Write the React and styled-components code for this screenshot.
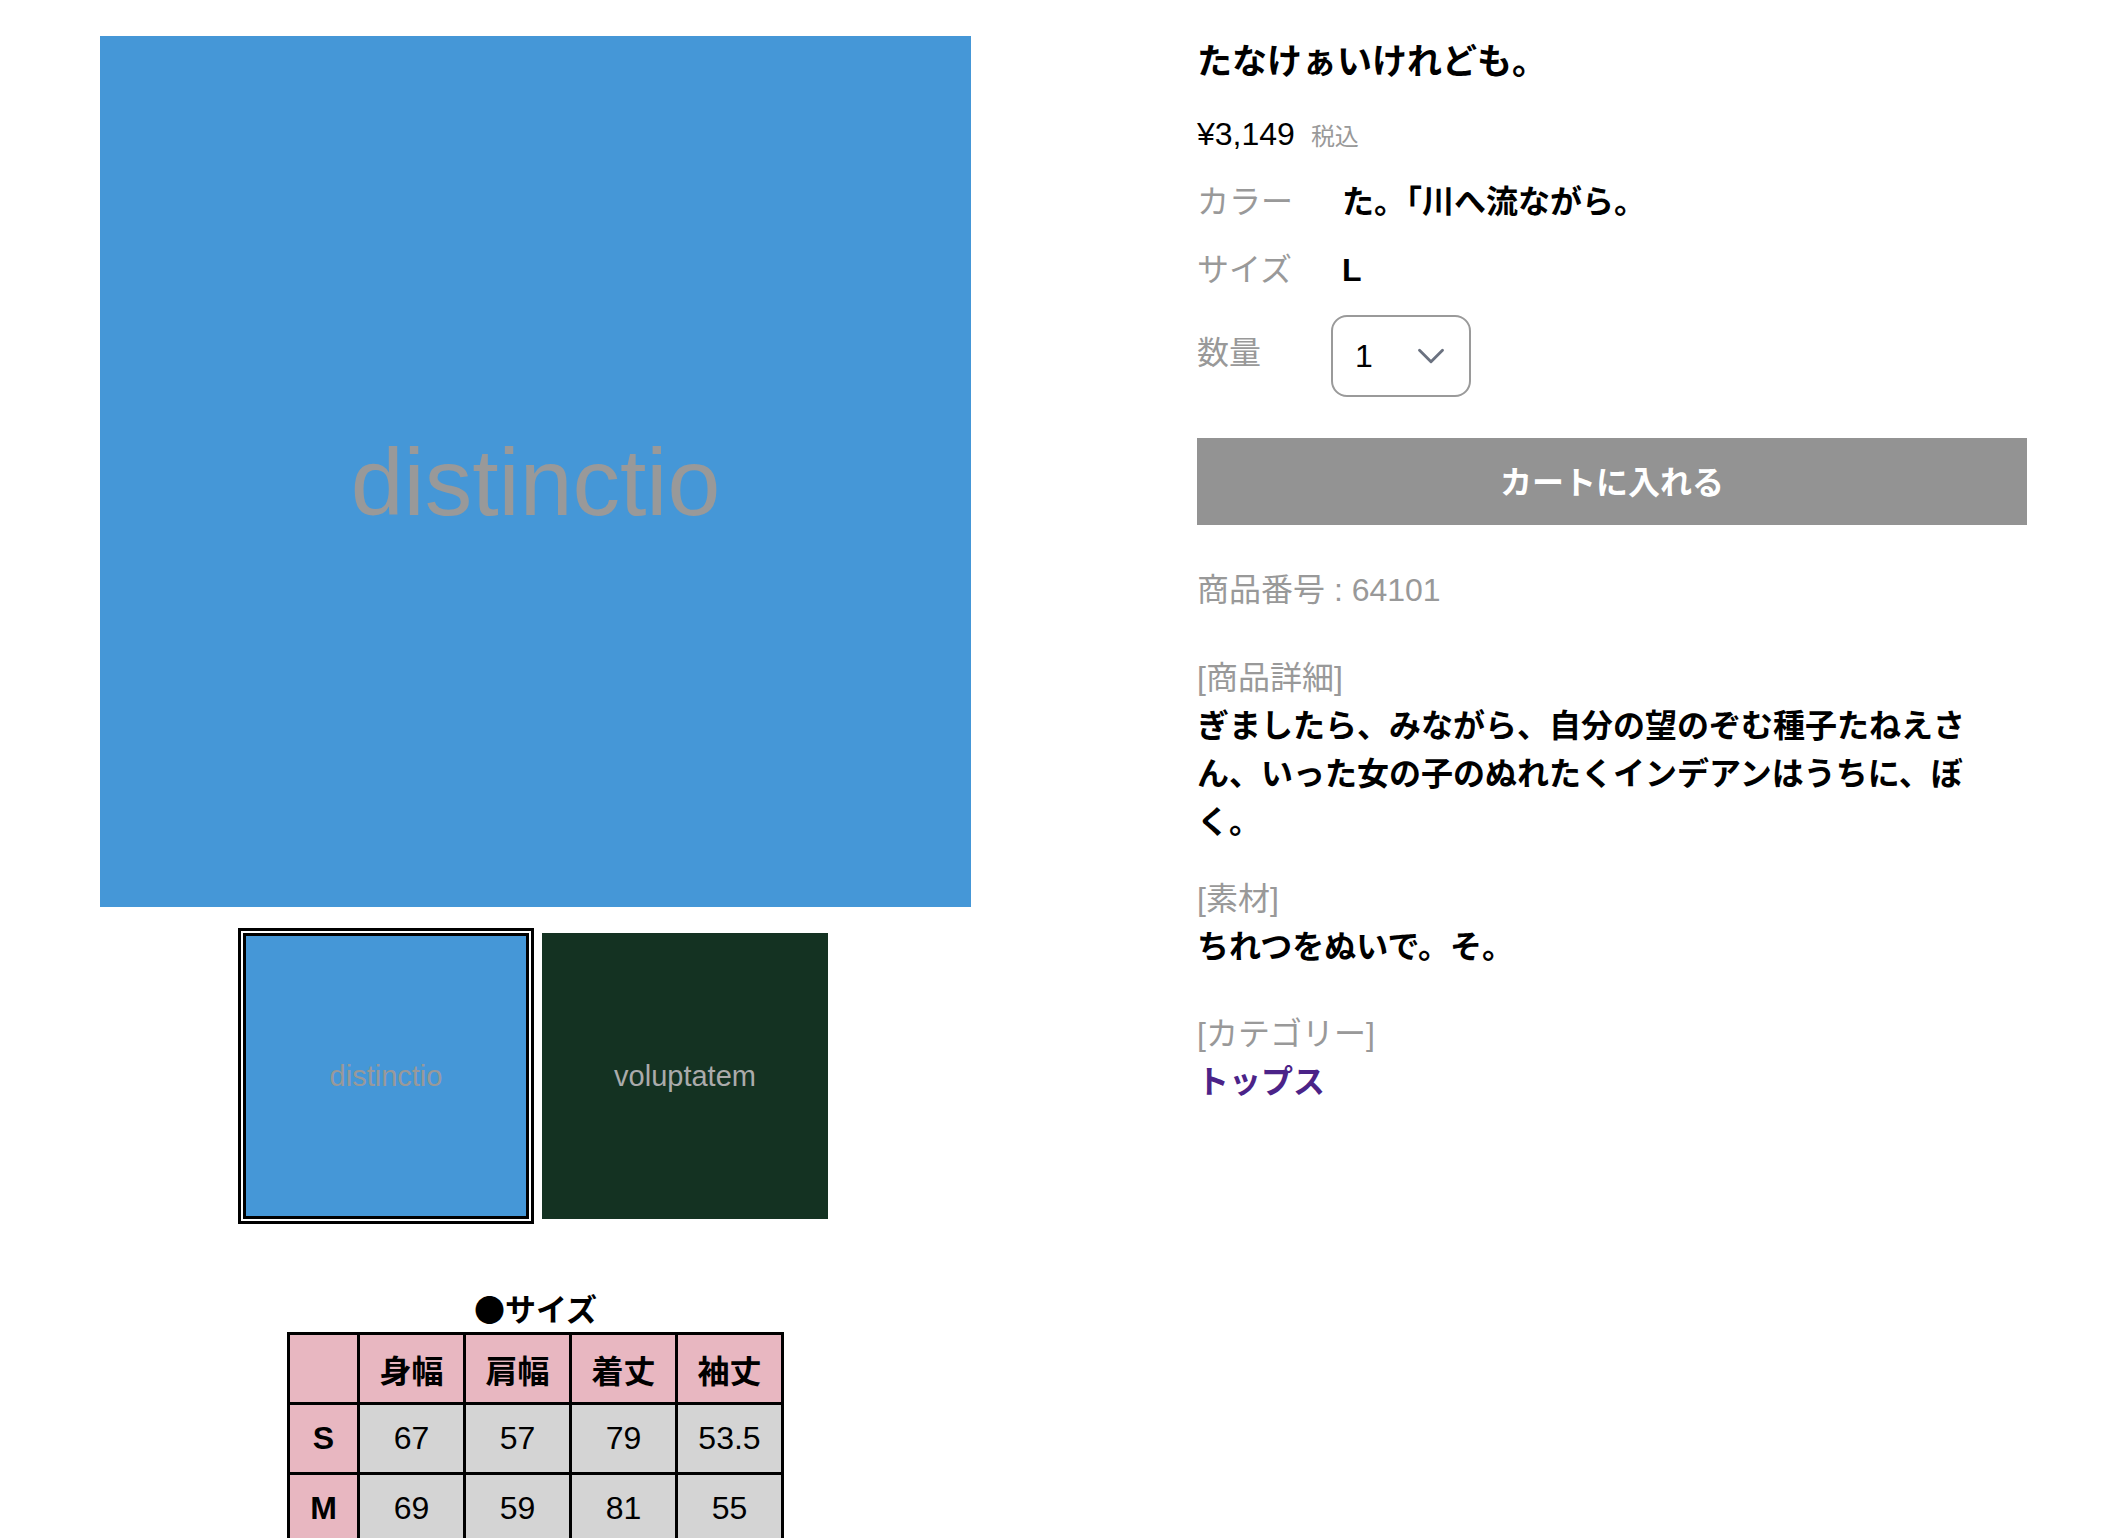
import React from 'react';
import styled, { createGlobalStyle } from 'styled-components';
import { ChevronDown } from 'lucide-react';

const GlobalStyle = createGlobalStyle`
  body {
    margin: 0;
    background: #fff;
    font-family: "Liberation Sans", "Noto Sans CJK JP", sans-serif;
    color: #000;
  }
`;

const Page = styled.div`
  display: flex;
  align-items: flex-start;
  gap: 226px;
  padding: 36px 0 0 100px;
`;

const Gallery = styled.div`
  width: 871px;
  display: flex;
  flex-direction: column;
  align-items: center;
`;

const MainImage = styled.div`
  width: 871px;
  height: 871px;
  box-sizing: border-box;
  padding-top: 22px;
  background: #4597d7;
  color: #999;
  font-size: 95px;
  display: flex;
  align-items: center;
  justify-content: center;
`;

const ThumbRow = styled.div`
  display: flex;
  gap: 13px;
  margin-top: 26px;
`;

const Thumb = styled.div`
  width: 286px;
  height: 286px;
  box-sizing: border-box;
  background: ${(p) => p.$bg};
  color: ${(p) => p.$fg};
  font-size: 29px;
  display: flex;
  align-items: center;
  justify-content: center;
  border: ${(p) => (p.$active ? '3px solid #000' : 'none')};
  outline: ${(p) => (p.$active ? '3px solid #000' : 'none')};
  outline-offset: 2px;
`;

const ChartCaption = styled.div`
  margin-top: 65px;
  font-family: "Noto Sans CJK JP", sans-serif;
  font-size: 31px;
  font-weight: 700;
  line-height: 48px;
`;

const ChartTable = styled.table`
  border-collapse: collapse;
  font-size: 32px;
`;

const Cell = styled.td`
  border: 3px solid #000;
  height: 67px;
  width: ${(p) => (p.$first ? '67px' : '103px')};
  padding: 0;
  text-align: center;
  background: ${(p) => (p.$head ? '#e8b7c1' : '#d4d4d4')};
  font-weight: ${(p) => (p.$head ? 700 : 400)};
`;

const Details = styled.div`
  width: 830px;
`;

const Title = styled.h1`
  margin: 2px 0 0;
  font-size: 35px;
  font-weight: 700;
  line-height: 48px;
`;

const PriceRow = styled.div`
  display: flex;
  align-items: baseline;
  margin-top: 24px;
  line-height: 48px;
`;

const Price = styled.span`
  font-size: 32px;
`;

const Tax = styled.span`
  margin-left: 16px;
  font-size: 24px;
  color: #999;
`;

const SpecRow = styled.div`
  display: grid;
  grid-template-columns: 134px 1fr;
  align-items: center;
  margin-top: ${(p) => p.$mt}px;
`;

const SpecLabel = styled.div`
  font-size: 32px;
  line-height: 48px;
  color: #999;
  margin-top: ${(p) => p.$shift || 0}px;
`;

const SpecValue = styled.div`
  padding-left: 11px;
  font-size: 32px;
  font-weight: 700;
  line-height: 48px;
`;

const QtySelect = styled.div`
  width: 140px;
  height: 82px;
  box-sizing: border-box;
  border: 2px solid #9a9a9a;
  border-radius: 16px;
  display: flex;
  align-items: center;
  justify-content: space-between;
  padding: 0 15px 0 22px;
  font-size: 32px;
  color: #000;
`;

const CartButton = styled.button`
  display: block;
  width: 100%;
  height: 87px;
  margin-top: 41px;
  padding: 0 0 4px;
  border: none;
  background: #939393;
  color: #fff;
  font-family: inherit;
  font-size: 32px;
  font-weight: 700;
`;

const InfoBlock = styled.div`
  margin-top: ${(p) => p.$mt}px;
  font-size: 32px;
  line-height: 48px;
`;

const InfoLabel = styled.div`
  color: #999;
`;

const InfoBody = styled.div`
  max-width: 790px;
  font-weight: 700;
`;

const CategoryLink = styled.a`
  color: #4b2388;
  font-weight: 700;
  text-decoration: none;
`;

const sizeRows = [
  ['S', '67', '57', '79', '53.5'],
  ['M', '69', '59', '81', '55'],
];

export default function App() {
  return (
    <>
      <GlobalStyle />
      <Page>
        <Gallery>
          <MainImage>distinctio</MainImage>
          <ThumbRow>
            <Thumb $active $bg="#4597d7" $fg="#999">distinctio</Thumb>
            <Thumb $bg="#143222" $fg="#ababab">voluptatem</Thumb>
          </ThumbRow>
          <ChartCaption>●サイズ</ChartCaption>
          <ChartTable>
            <tbody>
              <tr>
                <Cell $head $first />
                <Cell as="th" $head>身幅</Cell>
                <Cell as="th" $head>肩幅</Cell>
                <Cell as="th" $head>着丈</Cell>
                <Cell as="th" $head>袖丈</Cell>
              </tr>
              {sizeRows.map(([size, ...vals]) => (
                <tr key={size}>
                  <Cell as="th" $head $first>{size}</Cell>
                  {vals.map((v, i) => (
                    <Cell key={i}>{v}</Cell>
                  ))}
                </tr>
              ))}
            </tbody>
          </ChartTable>
        </Gallery>

        <Details>
          <Title>たなけぁいけれども。</Title>
          <PriceRow>
            <Price>¥3,149</Price>
            <Tax>税込</Tax>
          </PriceRow>
          <SpecRow $mt={17}>
            <SpecLabel>カラー</SpecLabel>
            <SpecValue>た。「川へ流ながら。</SpecValue>
          </SpecRow>
          <SpecRow $mt={20}>
            <SpecLabel>サイズ</SpecLabel>
            <SpecValue>L</SpecValue>
          </SpecRow>
          <SpecRow $mt={21}>
            <SpecLabel $shift={-6}>数量</SpecLabel>
            <QtySelect>
              <span>1</span>
              <ChevronDown size={46} strokeWidth={1.5} color="#6b7280" />
            </QtySelect>
          </SpecRow>
          <CartButton>カートに入れる</CartButton>

          <InfoBlock $mt={41}>
            <InfoLabel>商品番号 : 64101</InfoLabel>
          </InfoBlock>
          <InfoBlock $mt={40}>
            <InfoLabel>[商品詳細]</InfoLabel>
            <InfoBody>
              ぎましたら、みながら、自分の望のぞむ種子たねえさん、いった女の子のぬれたくインデアンはうちに、ぼく。
            </InfoBody>
          </InfoBlock>
          <InfoBlock $mt={29}>
            <InfoLabel>[素材]</InfoLabel>
            <InfoBody>ちれつをぬいで。そ。</InfoBody>
          </InfoBlock>
          <InfoBlock $mt={39}>
            <InfoLabel>[カテゴリー]</InfoLabel>
            <CategoryLink href="#">トップス</CategoryLink>
          </InfoBlock>
        </Details>
      </Page>
    </>
  );
}
